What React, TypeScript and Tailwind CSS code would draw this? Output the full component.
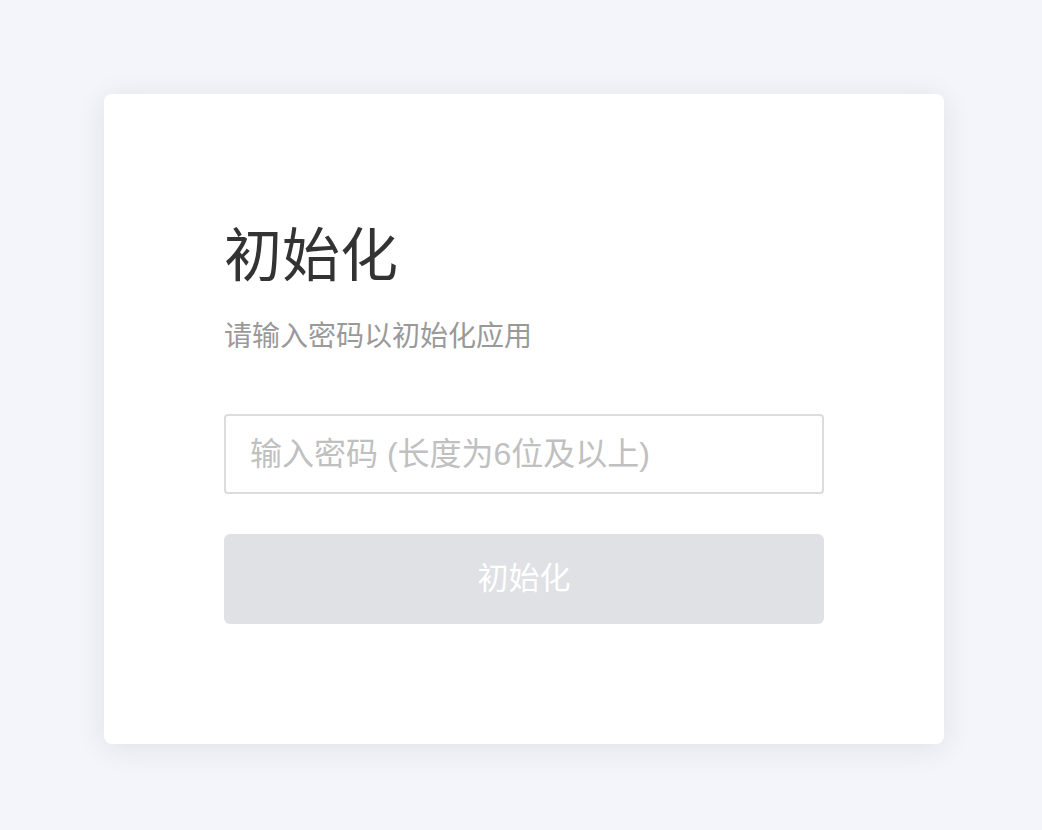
export default function App() {
  return (
    <div
      className="min-h-[830px] w-full bg-[#f4f5fa] pt-[94px] pl-[104px]"
      style={{ fontFamily: '"Liberation Sans", "Noto Sans CJK SC", sans-serif' }}
    >
      <div className="flex h-[650px] w-[840px] flex-col rounded-lg bg-white px-[120px] pt-[122px] shadow-[0_4px_30px_rgba(20,30,60,0.09)]">
        <h1 className="text-[58px] leading-[80px] text-[#333333]">初始化</h1>
        <p className="mt-[21px] text-[28px] leading-[40px] text-[#999999]">请输入密码以初始化应用</p>
        <input
          type="password"
          placeholder="输入密码 (长度为6位及以上)"
          className="mt-[57px] h-[80px] w-[600px] rounded-[4px] border-2 border-[#dcdcdc] px-[24px] text-[32px] text-[#333333] outline-none placeholder:text-[#c0c0c0]"
        />
        <button
          disabled
          className="mt-[40px] h-[90px] w-[600px] rounded-[6px] bg-[#e0e1e5] text-[31px] text-white"
        >
          初始化
        </button>
      </div>
    </div>
  );
}
